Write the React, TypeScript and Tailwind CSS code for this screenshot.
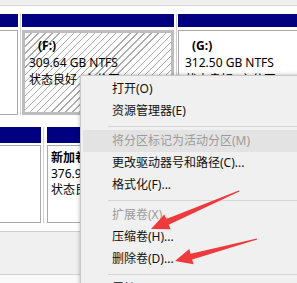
import React from "react";

interface MenuEntry {
  label?: string;
  disabled?: boolean;
  hover?: boolean;
  separator?: boolean;
}

const menuEntries: MenuEntry[] = [
  { label: "打开(O)" },
  { label: "资源管理器(E)" },
  { separator: true },
  { label: "将分区标记为活动分区(M)", disabled: true, hover: true },
  { label: "更改驱动器号和路径(C)..." },
  { label: "格式化(F)..." },
  { separator: true },
  { label: "扩展卷(X)...", disabled: true },
  { label: "压缩卷(H)..." },
  { label: "删除卷(D)..." },
  { separator: true },
  { label: "属性(P)" },
];

const hatch =
  "bg-[repeating-linear-gradient(135deg,#ffffff_0px,#ffffff_4px,#ababab_4px,#ababab_5px)]";

const ColumnGap = () => (
  <div className="w-[4px] flex justify-center">
    <div className="w-px bg-[#d2d2d2]" />
  </div>
);

const Arrows = () => (
  <svg
    className="absolute inset-0 pointer-events-none"
    width="297"
    height="283"
    viewBox="0 0 297 283"
  >
    <polygon
      fill="#ee3a3c"
      points="239.3,191.6 168.7,224.7 170.7,229.2 151,229 164.3,214.6 166.3,219.1 238.7,190.4"
    />
    <polygon
      fill="#ee3a3c"
      points="257.2,239.6 192.2,259.5 193.5,264.3 175,261 189.3,248.9 190.6,253.7 256.8,238.4"
    />
  </svg>
);

export default function App() {
  return (
    <div className="relative w-[297px] h-[283px] overflow-hidden bg-[#f0f0f0] font-['Noto_Sans','Noto_Sans_CJK_SC',sans-serif] text-[12px] text-black">
      {/* top strip */}
      <div className="h-[6px] bg-[#f0f0f0] border-b border-[#d6d6d6]" />

      {/* disk row 1 */}
      <div className="h-[110px] bg-white flex pt-[8px] pb-[1px]">
        <div className="w-[18px] flex flex-col">
          <div className="h-[13px] bg-[#000080]" />
          <div className="mt-[3px] flex-1 bg-white border border-l-0 border-[#a9a9a9]" />
        </div>
        <ColumnGap />
        <div className="w-[152px] flex flex-col">
          <div className="h-[13px] bg-[#000080]" />
          <div className={`mt-[3px] flex-1 border-[3px] border-[#bdbdbd] ${hatch} pl-[4px] pt-[4px] leading-[17px]`}>
            <div className="ml-[9px] font-bold">(F:)</div>
            <div>309.64 GB NTFS</div>
            <div className="whitespace-nowrap">状态良好 (主分区)</div>
          </div>
        </div>
        <ColumnGap />
        <div className="flex-1 flex flex-col">
          <div className="h-[13px] bg-[#000080]" />
          <div className="mt-[3px] flex-1 bg-white border border-r-0 border-[#a9a9a9] pl-[6px] pt-[6px] leading-[17px]">
            <div className="ml-[7px] font-bold">(G:)</div>
            <div>312.50 GB NTFS</div>
            <div className="whitespace-nowrap">状态良好 (主分区)</div>
          </div>
        </div>
      </div>

      {/* disk row 2 */}
      <div className="h-[116px] bg-white flex pt-[11px] pb-[8px] border-b border-[#cdcdcd]">
        <div className="w-[41px] flex flex-col">
          <div className="h-[16px] bg-[#000080]" />
          <div className="mt-[2px] flex-1 bg-white border border-l-0 border-[#a9a9a9]" />
        </div>
        <ColumnGap />
        <div className="flex-1 flex flex-col pl-[2px]">
          <div className="h-[16px] bg-[#000080]" />
          <div className="mt-[2px] flex-1 bg-white border border-[#a9a9a9] pl-[3px] pt-[4px] leading-[16px]">
            <div className="w-[32px] overflow-hidden whitespace-nowrap">
              <div className="font-bold">新加卷</div>
              <div>376.9</div>
              <div>状态良</div>
            </div>
          </div>
        </div>
      </div>

      {/* empty list area */}
      <div className="h-[43px] bg-[#f0f0f0] border-b border-[#d2d2d2]" />
      <div className="h-[10px] bg-[#fafafa]" />

      {/* context menu */}
      <div className="absolute left-[80px] top-[75px] w-[230px] bg-[#f0f0f0] border border-[#c8c8c8] shadow-[0_0_4px_rgba(0,0,0,0.3)] pt-[2px] pb-[3px]">
        {menuEntries.map((item, index) =>
          item.separator ? (
            <div key={index} className="h-[8px] flex items-center pl-[27px]">
              <div className="h-px flex-1 bg-[#d4d4d4]" />
            </div>
          ) : (
            <div
              key={index}
              className={`h-[22px] leading-[22px] pl-[29px] mx-[2px] whitespace-nowrap ${
                item.hover ? "bg-[#e3e3e3]" : ""
              } ${item.disabled ? "text-[#9b9b9b]" : "text-[#111]"}`}
            >
              {item.label}
            </div>
          )
        )}
      </div>

      <Arrows />
    </div>
  );
}
